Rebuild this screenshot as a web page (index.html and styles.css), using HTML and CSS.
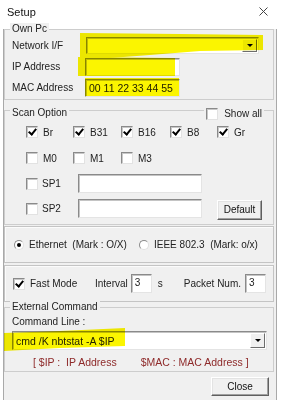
FILE: index.html
```html
<!DOCTYPE html>
<html lang="en">

<head>
    <meta charset="UTF-8">
    <meta name="viewport" content="width=device-width, initial-scale=1.0">
    <title>Setup</title>
    <link rel="stylesheet" href="styles.css">
</head>

<body>
    <div class="titlebar">
        <span class="title">Setup</span>
        <svg class="close-x" width="9" height="9" viewBox="0 0 9 9">
            <path d="M0.5 0.5 L8.5 8.5 M8.5 0.5 L0.5 8.5" stroke="#444" stroke-width="1" fill="none" />
        </svg>
    </div>

    <div class="client">
        <div class="group own">
            <div class="group-head"><span class="caption">Own Pc</span></div>
            <div class="field">
                <label>Network I/F</label>
                <div class="combo netif"><span class="combo-text"></span><span class="combo-btn"><i></i></span></div>
            </div>
            <div class="field">
                <label>IP Address</label>
                <div class="edit addr"></div>
            </div>
            <div class="field">
                <label>MAC Address</label>
                <div class="edit addr mac">00 11 22 33 44 55</div>
            </div>
        </div>

        <div class="group scan">
            <div class="group-head">
                <span class="caption">Scan Option</span>
                <span class="caption show-all"><span class="cb"></span>Show all</span>
            </div>
            <div class="check-row">
                <span class="chk"><span class="cb on"></span>Br</span>
                <span class="chk"><span class="cb on"></span>B31</span>
                <span class="chk"><span class="cb on"></span>B16</span>
                <span class="chk"><span class="cb on"></span>B8</span>
                <span class="chk"><span class="cb on"></span>Gr</span>
            </div>
            <div class="check-row">
                <span class="chk"><span class="cb"></span>M0</span>
                <span class="chk"><span class="cb"></span>M1</span>
                <span class="chk"><span class="cb"></span>M3</span>
            </div>
            <div class="sp-row">
                <span class="chk sp"><span class="cb"></span>SP1</span>
                <div class="edit sp-edit"></div>
            </div>
            <div class="sp-row">
                <span class="chk sp"><span class="cb"></span>SP2</span>
                <div class="edit sp-edit"></div>
                <button class="btn default">Default</button>
            </div>
        </div>

        <div class="panel radios">
            <span class="radio-opt eth"><span class="rb on"></span>Ethernet&nbsp; (Mark : O/X)</span>
            <span class="radio-opt"><span class="rb"></span>IEEE 802.3&nbsp; (Mark: o/x)</span>
        </div>

        <div class="panel fast">
            <span class="chk fast-mode"><span class="cb on"></span>Fast Mode</span>
            <span>Interval</span>
            <div class="edit num">3</div>
            <span class="unit">s</span>
            <span class="packet">Packet Num.</span>
            <div class="edit num">3</div>
        </div>

        <div class="group ext">
            <div class="group-head"><span class="caption">External Command</span></div>
            <div class="cmd-label">Command Line :</div>
            <div class="combo cmd"><span class="combo-text">cmd /K nbtstat -A $IP</span><span class="combo-btn"><i></i></span></div>
            <div class="note">
                <span>[ $IP :&nbsp; IP Address</span>
                <span class="note-mac">$MAC : MAC Address ]</span>
            </div>
        </div>

        <div class="actions">
            <button class="btn close">Close</button>
        </div>
    </div>

    <!-- highlighter marks drawn over the dialog -->
    <svg class="marker" width="282" height="400" viewBox="0 0 282 400">
        <polygon points="80,33 180,34 263,35 263,50 200,51 150,55 110,58 80,59" fill="#fbf500" />
        <polygon points="78,57 175,58 175,76 78,76" fill="#fbf500" />
        <polygon points="85,78 179,78 179,96 85,96" fill="#fbf500" />
        <polygon points="4,333 60,331 125,328 125,346 60,348 4,351" fill="#fbf500" />
    </svg>
</body>

</html>
```

FILE: styles.css
```css
* {
    box-sizing: border-box;
}

html {
    background-color: #fff;
}

body {
    position: relative;
    width: 282px;
    height: 400px;
    margin: 0;
    overflow: hidden;
    font-family: "Liberation Sans", Arial, sans-serif;
    font-size: 10px;
    color: #222;
}

.titlebar {
    display: flex;
    align-items: center;
    justify-content: space-between;
    height: 23px;
    padding: 0 14px 0 7px;
    background-color: #fff;
}

.title {
    font-size: 11px;
    color: #111;
}

.client {
    width: 274px;
    height: 377px;
    margin-left: 3px;
    padding-right: 2px;
    background-color: #f0f0f0;
    border-left: 1px solid #a9a9a9;
    border-right: 1px solid #a9a9a9;
}

/* group boxes */
.group {
    border: 1px solid #cdcdcd;
}

.group-head {
    display: flex;
    align-items: center;
    justify-content: space-between;
    height: 12px;
    margin-top: -7px;
    padding: 0 9px 0 5px;
}

.caption {
    padding: 0 2px;
    line-height: 12px;
    background-color: #f0f0f0;
}

.own {
    margin-top: 6px;
    padding-bottom: 1px;
}

.field {
    display: flex;
    align-items: center;
    height: 21px;
    padding-left: 7px;
}

.field label {
    width: 73px;
}

/* edit boxes */
.edit {
    height: 18px;
    padding: 2px 3px;
    background-color: #fff;
    border: 1px solid;
    border-color: #8a8a8a #e4e4e4 #e4e4e4 #8a8a8a;
    box-shadow: inset 1px 1px #c4c4c4;
    line-height: 12px;
    white-space: pre;
}

.addr {
    width: 95px;
}

.mac {
    font-size: 10.5px;
}

.combo {
    display: flex;
    align-items: stretch;
    background-color: #fff;
    border: 1px solid;
    border-color: #8a8a8a #e4e4e4 #e4e4e4 #8a8a8a;
    box-shadow: inset 1px 1px #c4c4c4;
}

.combo-text {
    flex: 1;
    padding: 0 3px;
    display: flex;
    align-items: center;
}

.combo-btn {
    display: flex;
    align-items: center;
    justify-content: center;
    width: 15px;
    margin: 1px;
    background-color: #f0f0f0;
    border: 1px solid;
    border-color: #fff #6d6d6d #6d6d6d #fff;
}

.combo-btn i {
    width: 0;
    height: 0;
    border-left: 3px solid transparent;
    border-right: 3px solid transparent;
    border-top: 3px solid #000;
}

.netif {
    width: 173px;
    height: 17px;
    margin-left: 1px;
}

/* check boxes and radios */
.chk {
    display: flex;
    align-items: center;
    gap: 5px;
}

.cb {
    position: relative;
    width: 12px;
    height: 12px;
    flex-shrink: 0;
    background-color: #fff;
    border: 1px solid;
    border-color: #8a8a8a #e2e2e2 #e2e2e2 #8a8a8a;
    box-shadow: inset 1px 1px #c8c8c8;
}

.cb.on::after {
    content: "";
    position: absolute;
    left: 3px;
    top: 0px;
    width: 3px;
    height: 6px;
    border-right: 2px solid #000;
    border-bottom: 2px solid #000;
    transform: rotate(40deg);
}

.rb {
    position: relative;
    width: 10px;
    height: 10px;
    flex-shrink: 0;
    background-color: #fff;
    border-radius: 50%;
    border: 1px solid;
    border-color: #8a8a8a #e0e0e0 #e0e0e0 #8a8a8a;
}

.rb.on::after {
    content: "";
    position: absolute;
    left: 2px;
    top: 2px;
    width: 4px;
    height: 4px;
    border-radius: 50%;
    background-color: #000;
}

.scan {
    margin-top: 10px;
    padding: 3px 0;
}

.show-all {
    display: flex;
    align-items: center;
    gap: 6px;
    margin-top: 1px;
}

.check-row {
    display: grid;
    grid-template-columns: 47px 48px 49px 47px auto;
    align-items: center;
    height: 26px;
    padding-left: 21px;
}

.sp-row {
    display: flex;
    align-items: center;
    height: 25px;
    padding-left: 21px;
}

.sp {
    width: 52px;
    gap: 4px;
}

.sp-edit {
    width: 124px;
    height: 19px;
}

.btn {
    font-family: "Liberation Sans", Arial, sans-serif;
    font-size: 10px;
    color: #111;
    background-color: #f0f0f0;
    border: 1px solid;
    border-color: #fff #5f5f5f #5f5f5f #fff;
    box-shadow: inset -1px -1px #a0a0a0, inset 1px 1px #e3e3e3;
    padding: 0;
}

.default {
    width: 45px;
    height: 20px;
    margin-left: 15px;
    margin-top: 2px;
}

/* plain panels */
.panel {
    display: flex;
    align-items: center;
    height: 37px;
    border: 1px solid #c4c4c4;
    box-shadow: inset 1px 1px #fbfbfb;
}

.radios {
    margin-top: 1px;
    padding-left: 9px;
}

.radio-opt {
    display: flex;
    align-items: center;
    gap: 5px;
}

.eth {
    width: 125px;
}

.fast {
    margin-top: 2px;
    padding-left: 8px;
}

.fast-mode {
    width: 82px;
    gap: 5px;
}

.num {
    width: 21px;
    height: 19px;
    margin-left: 3px;
}

.unit {
    margin-left: 6px;
}

.packet {
    margin-left: 21px;
    margin-right: 1px;
}

.ext {
    margin-top: 5px;
}

.cmd-label {
    display: flex;
    align-items: center;
    height: 17px;
    padding-left: 7px;
}

.cmd {
    width: 255px;
    height: 19px;
    margin: 1px 0 0 7px;
    font-size: 10.5px;
}

.note {
    display: flex;
    align-items: center;
    height: 21px;
    padding: 3px 0 0 28px;
    color: #8e2a2a;
    font-size: 10.5px;
}

.note-mac {
    margin-left: 24px;
}

.actions {
    display: flex;
    justify-content: flex-end;
    margin-top: 5px;
    padding-right: 5px;
}

.close {
    width: 58px;
    height: 19px;
}

.marker {
    position: absolute;
    left: 0;
    top: 0;
    pointer-events: none;
    mix-blend-mode: multiply;
}
```
